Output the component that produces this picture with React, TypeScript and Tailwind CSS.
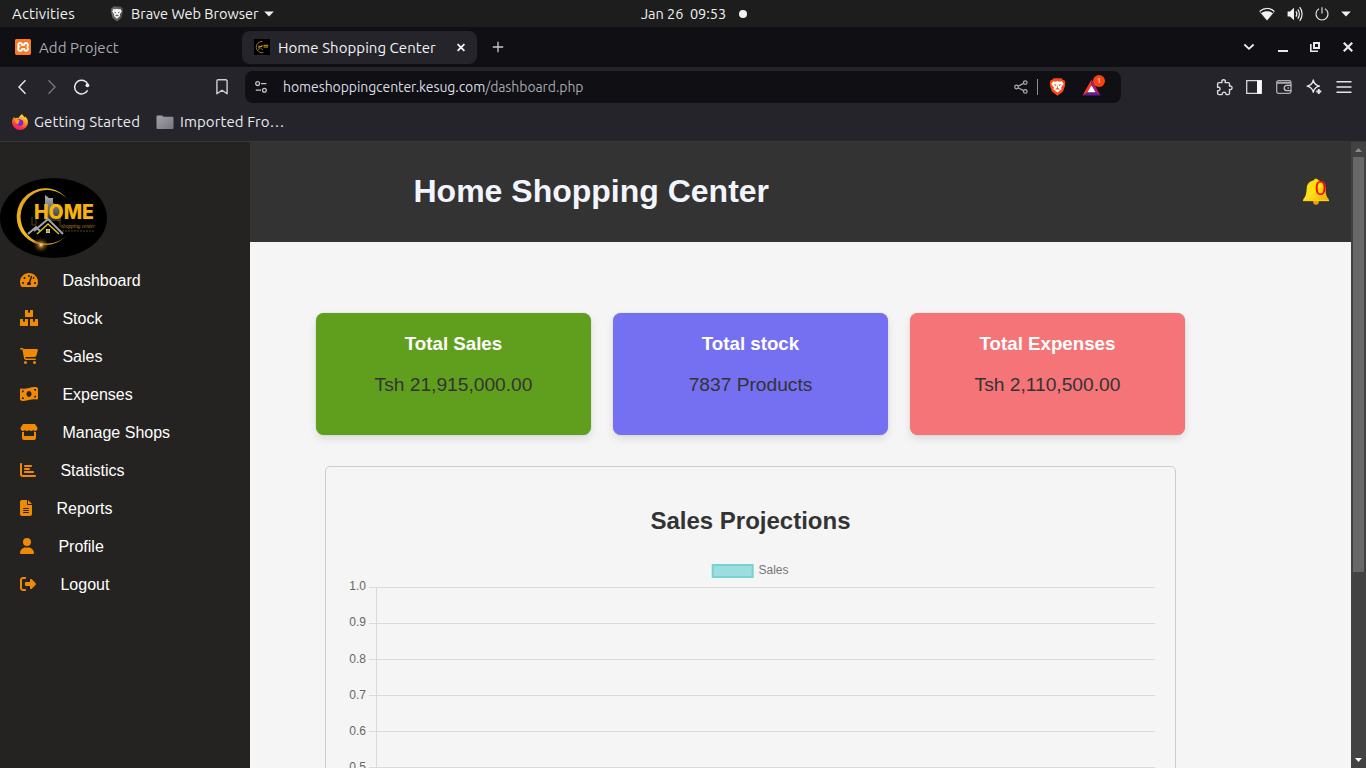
import React from "react";
import {
  FaCartShopping,
  FaMoneyBillWave,
  FaStore,
  FaChartBar,
  FaFileLines,
  FaUser,
  FaRightFromBracket,
} from "react-icons/fa6";
import { FaBoxes, FaTachometerAlt } from "react-icons/fa";
import { SiXampp } from "react-icons/si";

const ui = "font-['Ubuntu','Noto_Sans',sans-serif]";
const arial = "font-['Liberation_Sans',Arial,sans-serif]";

function Wifi() {
  return (
    <svg width="16" height="14" viewBox="0 0 16 14" fill="#f2f2f2">
      <path d="M8 13.2 0.6 4.4C4.6 .3 11.4 .3 15.4 4.4Z" fill="none" stroke="#9b9b9b" strokeWidth=".9" />
      <path d="M8 13.2 2.2 6.2C5.600 3.600 10.400 3.600 13.800 6.200Z" />
      <path d="M.8 4.4C4.8 .5 11.2 .5 15.2 4.4" fill="none" stroke="#f2f2f2" strokeWidth="1.2" />
    </svg>
  );
}

function Volume() {
  return (
    <svg width="16" height="16" viewBox="0 0 16 16" fill="none" stroke="#f2f2f2">
      <path d="M.6 5.5H3L7 1.8v12.4L3 10.5H.6Z" fill="#f2f2f2" stroke="none" />
      <path d="M9 5.4c1 1.5 1 3.7 0 5.2M10.8 3.4c2.1 2.6 2.1 6.6 0 9.2M12.7 1.2c3.2 3.8 3.2 9.8 0 13.6" strokeWidth="1.2" />
    </svg>
  );
}

function Power() {
  return (
    <svg width="14" height="14" viewBox="0 0 14 14" fill="none" stroke="#e8e8e8" strokeWidth="1.1">
      <path d="M7 .3v6.2M4 1.8a6 6 0 1 0 6 0" />
    </svg>
  );
}

function Caret() {
  return (
    <svg width="10" height="6" viewBox="0 0 10 6" fill="#f2f2f2">
      <path d="M.2.5h9.600L5 5.5Z" />
    </svg>
  );
}

function SystemBar() {
  return (
    <div className="flex h-[27px] items-center bg-[#1d1d1d] text-[14.5px] leading-[27px] text-[#f2f2f2]">
      <span className="ml-[12px] w-[97px] text-[15px] tracking-[0.14px]">Activities</span>
      <span className="flex h-4 w-4 items-center justify-center">
        <svg width="14" height="16" viewBox="0 0 14 16">
          <linearGradient id="shield" x1="0" x2="1">
            <stop offset="0" stopColor="#707070" />
            <stop offset="1" stopColor="#4c4c4c" />
          </linearGradient>
          <path d="M3.6.5h6.8l1.3 1.3 1.3 1-.4 2 .4 1-1.7 6.2L7 15.6l-4.3-3.6L1 5.8l.4-1-.4-2 1.3-1Z" fill="url(#shield)" />
          <path d="m3.5 3 2 .2L7 2.8l1.5.4 2-.2 1.3 2.5-2 2.8.2 1.8L7 12.8l-3-2.7.2-1.8-2-2.8Z" fill="#f7f7f7" />
          <path d="m3.8 5.5 2.4.7-.5 1.2ZM10.2 5.5l-2.4.7.5 1.2ZM5 9.4l2-1 2 1-2 1Z" fill="#666" />
        </svg>
      </span>
      <span className="ml-[6px] w-[129px] whitespace-nowrap tracking-[-0.02px]">Brave Web Browser</span>
      <span className="ml-[4px] flex">
        <Caret />
      </span>
      <span className="ml-[367px] w-[86px] whitespace-pre tracking-[-0.03px]">Jan 26  09:53</span>
      <span className="ml-[12px] h-2 w-2 rounded-full bg-[#f2f2f2]" />
      <span className="ml-auto flex items-center pr-[15px]">
        <Wifi />
        <span className="ml-[12px] flex">
          <Volume />
        </span>
        <span className="ml-[12px] flex">
          <Power />
        </span>
        <span className="ml-[12px] flex">
          <Caret />
        </span>
      </span>
    </div>
  );
}

function MiniLogo() {
  return (
    <svg width="16" height="16" viewBox="0 0 16 16" className="shrink-0">
      <rect width="16" height="16" fill="#000" />
      <path d="M8.5 2.5A5.6 5.6 0 1 0 9.5 13.4" fill="none" stroke="#8e7420" strokeWidth="1" />
      <path d="M5 6.5v3M5 7.6h3V6M9.5 6.3h4.8M9.5 8h4.6" stroke="#d3a514" strokeWidth="1" fill="none" />
      <path d="m4 11 2.5-2L9 11" stroke="#8a8560" strokeWidth=".8" fill="none" />
    </svg>
  );
}

function TabStrip() {
  return (
    <div className="flex h-[40px] items-center bg-[#0f0f14]">
      <div className="flex w-[242px] items-center pl-[15px]">
        <span className="flex h-4 w-4 items-center justify-center rounded-[3px] bg-[#fb7a24]">
          <span className="flex h-3 w-3 items-center justify-center bg-white text-[16px] text-[#fb7a24]">
            <SiXampp className="shrink-0" />
          </span>
        </span>
        <span className="ml-[8px] pt-px text-[15px] leading-[20px] tracking-[0.07px] text-[#a9a9ad]">Add Project</span>
      </div>
      <div className="flex h-[33px] w-[235px] items-center rounded-[8px] bg-[#24242a] pl-[12px]">
        <MiniLogo />
        <span className="ml-[8px] w-[175px] whitespace-nowrap pt-px text-[15px] leading-[20px] tracking-[0.05px] text-[#f3f3f5]">Home Shopping Center</span>
        <svg width="16" height="16" viewBox="0 0 16 16" stroke="#f3f3f5" strokeWidth="1.8">
          <path d="m4.6 5.100 6.8 6.8M11.4 5.100l-6.8 6.8" />
        </svg>
      </div>
      <svg width="12" height="12" viewBox="0 0 12 12" stroke="#c9c9cc" strokeWidth="1.3" className="ml-[15px]">
        <path d="M6 .8v10.4M.8 6h10.4" />
      </svg>
      <div className="ml-auto flex items-center pr-[12px]">
        <svg width="12" height="8" viewBox="0 0 12 8" fill="none" stroke="#f2f2f4" strokeWidth="1.8">
          <path d="m1.4 1.5 4.6 4.3 4.6-4.3" />
        </svg>
        <svg width="10" height="10" viewBox="0 0 10 10" fill="#e8e8ee" className="ml-[23px]">
          <path d="M0 8h10v2H0z" />
        </svg>
        <svg width="10" height="10" viewBox="0 0 10 10" fill="none" stroke="#e8e8ee" className="ml-[22px]">
          <path d="M4 1h5v5H4z" strokeWidth="2" />
          <path d="M.8 2v7.2H8" strokeWidth="1.6" />
        </svg>
        <svg width="12" height="12" viewBox="0 0 12 12" stroke="#e8e8ee" strokeWidth="2.2" className="ml-[22px]">
          <path d="m1.8 1.8 8.4 8.4M10.2 1.8l-8.4 8.4" />
        </svg>
      </div>
    </div>
  );
}

function AddressRow() {
  return (
    <div className="flex h-[40px] items-center">
      <svg width="92" height="16" viewBox="0 0 92 16" fill="none" strokeWidth="1.4">
        <path d="M25.5 1.3 19 8l6.5 6.7" stroke="#ececf0" />
        <path d="m48.5 1.3 6.5 6.7-6.5 6.7" stroke="#76767c" />
        <path d="M88 5.6A6.9 6.9 0 1 0 87.6 11.4" stroke="#ececf0" strokeWidth="1.5" />
        <circle cx="87.4" cy="6.3" r="1.9" fill="#ececf0" />
      </svg>
      <svg width="12" height="16" viewBox="0 0 12 16" fill="none" stroke="#ceced3" strokeWidth="1.4" className="ml-[124px]">
        <path d="M.9 14.8V2A1.2 1.2 0 0 1 2.1.8h7.8A1.2 1.2 0 0 1 11.1 2v12.8L6 11.2Z" strokeLinejoin="round" />
      </svg>
      <div className="ml-[17px] flex h-[32px] w-[876px] items-center rounded-[8px] bg-[#0f0f14] pl-[10px]">
        <svg width="12" height="12" viewBox="0 0 12 12" fill="none" stroke="#c3c3c8" strokeWidth="1.3">
          <circle cx="2.6" cy="2.6" r="1.9" />
          <circle cx="9.4" cy="9.2" r="1.9" />
          <path d="M6 2.6h5.4M.7 9.2H6" />
        </svg>
        <span className="ml-[16px] w-[731px] whitespace-nowrap text-[14px] tracking-[-0.08px] text-[#a7a7ac]">
          <span className="text-[#dcdce4]">homeshoppingcenter.kesug.com</span>/dashboard.php
        </span>
        <svg width="14" height="14" viewBox="0 0 14 14" fill="none" stroke="#adadb2" strokeWidth="1.2">
          <circle cx="2.5" cy="7" r="1.8" />
          <circle cx="11.3" cy="2.6" r="1.8" />
          <circle cx="11.3" cy="11.4" r="1.8" />
          <path d="m4.1 6.2 5.5-2.8M4.1 7.8l5.5 2.8" />
        </svg>
        <span className="ml-[9px] h-4 w-px bg-[#8e8e93]" />
        <svg width="17" height="18" viewBox="0 0 17 18" className="ml-[11px]">
          <path d="M4.6.3h7.8l1.6 1.6 1.4.4 1 2.4-.5 1.3.3 1.2L14 13.6l-5.5 4.2L3 13.6.8 7.2l.3-1.2L.6 4.7l1-2.4L3 1.9Z" fill="#fb4a14" />
          <path d="m4.3 3.3 2.2.4 2-.6 2 .6 2.2-.4 2 2.6-2.5 3.3.3 2.1-4 3.3-4-3.3.3-2.1L2.3 5.9Z" fill="#fff" />
          <path d="m4.4 6 3 .8-.6 1.5ZM12.6 6l-3 .8.6 1.5ZM8.5 6.8l.5 3-.5.7-.5-.7ZM5.8 11.2l2.7-1.4 2.7 1.4-2.7.2Z" fill="#fb4a14" />
        </svg>
        <span className="relative ml-[16px] h-[17px] w-[20px]">
          <svg width="20" height="17" viewBox="0 0 20 17">
            <path d="M9.5.5.5 16.5 9.5 12Z" fill="#fc3a1c" />
            <path d="m9.5.5 9 16L9.5 12Z" fill="#b01e78" />
            <path d="m.5 16.5 9-6 9 6Z" fill="#631d8f" />
            <path d="m9.5 6.5 4 6.8h-8Z" fill="#fff" />
          </svg>
          <span className="absolute -top-[4px] left-[11px] h-3 w-3 rounded-full bg-[#fb4112] text-center text-[8px] leading-[12px] text-white">1</span>
        </span>
      </div>
      <div className="ml-auto flex items-center pr-[14px]">
        <svg width="17" height="17" viewBox="0 0 17 17" fill="none" stroke="#dadade" strokeWidth="1.4" strokeLinejoin="round">
          <path d="M3 3.6h3.1c-.8-1.5 0-2.9 1.5-2.9s2.3 1.4 1.500 2.900h3.100a1.300 1.300 0 0 1 1.300 1.300v2.300c1.300-.6 2.600.2 2.600 1.600s-1.300 2.200-2.600 1.600v3.900a1.300 1.300 0 0 1-1.300 1.300h-2.100c.2-1.500-.8-2.300-2-2.300s-2.200.8-2 2.300H2.900a1.300 1.300 0 0 1-1.300-1.300v-2.700c1.600.3 2.400-.5 2.400-1.800S3.200 8 1.600 8.300V5A1.400 1.400 0 0 1 3 3.600Z" />
        </svg>
        <svg width="16" height="14" viewBox="0 0 16 14" className="ml-[13px]">
          <path d="M.7.7h14.600v12.600H.7Z" fill="none" stroke="#d8d8dc" strokeWidth="1.300" />
          <path d="M11 .5h4.500v13H11Z" fill="#fff" />
        </svg>
        <svg width="16" height="14" viewBox="0 0 16 14" fill="none" stroke="#a9a9ae" strokeWidth="1.300" className="ml-[14px]">
          <rect x=".7" y=".7" width="14.300" height="12.600" rx="1.800" />
          <path d="M.7 2.800H15" strokeWidth="2" />
          <path d="M15.300 5.400h-4.500a2.600 2.600 0 0 0 0 5.200h4.500" stroke="#c8c8cc" />
          <path d="M11.500 8h1.500" />
        </svg>
        <svg width="16" height="16" viewBox="0 0 16 16" fill="none" stroke="#e6e6ea" strokeWidth="1.300" strokeLinejoin="round" className="ml-[14px]">
          <path d="M7.300 1c.8 4 2.200 5.400 6.200 6.200-2 .4-3.300 1-4.200 2-1 .9-1.600 2.200-2 4.200C6.500 9.400 5.100 8 1.100 7.200 5.100 6.400 6.500 5 7.300 1Z" />
          <path d="M12.800 10v5M10.300 12.500h5" strokeWidth="1.900" />
        </svg>
        <svg width="16" height="12" viewBox="0 0 16 12" fill="#e6e6ea" className="ml-[14px]">
          <path d="M.5 0h15v1.400H.5zM.5 5.300h15v1.400H.5zM.5 10.600h15V12H.5z" />
        </svg>
      </div>
    </div>
  );
}

function Bookmarks() {
  return (
    <div className="flex h-[34px] items-center pb-[4px] pl-[12px] text-[15px] leading-[20px] text-[#ebebef]">
      <svg width="16" height="16" viewBox="0 0 16 16">
        <defs>
          <linearGradient id="fox" x1=".8" y1="0" x2=".3" y2="1">
            <stop offset="0" stopColor="#fff13f" />
            <stop offset=".4" stopColor="#ff9a22" />
            <stop offset=".75" stopColor="#ff3a3a" />
            <stop offset="1" stopColor="#e31587" />
          </linearGradient>
        </defs>
        <path d="M10 0c1 1.500 1.400 2.200 2.800 3.400l.2-1C15.200 4 16 6 16 8.300a8 7.700 0 0 1-16 0C0 5.600 1 4 2.300 2.700l.4 1.500C4 3.500 5.500 3.500 6.500 4 7.500 2 8.500 1.600 10 0Z" fill="url(#fox)" />
        <path d="M4.500 6.300c2-.8 3.500-1.600 5.500-.3 2 1.400 1.800 4.400-.2 5.500-2.200 1.200-5 0-5-2.200 1.200.3 2.300-.3 2.600-1.200-1 0-2-.7-2.900-1.800Z" fill="#7a24d8" />
        <path d="M3 5.500c1.200-.5 2.400-.3 3.400.6l1.600.6c-.4 1-1.700 1-2 1.800-.3.700.3 1.400 1.300 1.500-2 .6-4.500-.8-4.300-4.500Z" fill="#ffa11c" />
      </svg>
      <span className="ml-[6px] w-[106px] whitespace-nowrap tracking-[0.12px]">Getting Started</span>
      <svg width="18" height="15" viewBox="0 0 18 15" className="ml-[16px]">
        <defs>
          <linearGradient id="folder" x1="0" y1="0" x2="1" y2="1">
            <stop offset="0" stopColor="#a3a2aa" />
            <stop offset="1" stopColor="#77767e" />
          </linearGradient>
        </defs>
        <path d="M.5 1.500a1 1 0 0 1 1-1h4.700l1.300 1.300h9a1 1 0 0 1 1 1v10.300a1 1 0 0 1-1 1h-15a1 1 0 0 1-1-1Z" fill="url(#folder)" />
      </svg>
      <span className="ml-[6px] tracking-[0.09px]">Imported Fro…</span>
    </div>
  );
}

function BrandLogo() {
  return (
    <svg width="107" height="80" viewBox="0 0 107 80" className="block">
      <defs>
        <linearGradient id="ring" x1="0" y1="0" x2="1" y2="1">
          <stop offset="0" stopColor="#d99a12" />
          <stop offset=".45" stopColor="#f2bd20" />
          <stop offset="1" stopColor="#c58b10" />
        </linearGradient>
        <linearGradient id="tower" x1="0" y1="0" x2="0" y2="1">
          <stop offset="0" stopColor="#b5b5b5" />
          <stop offset="1" stopColor="#2b2b2b" />
        </linearGradient>
        <radialGradient id="glow">
          <stop offset="0" stopColor="#fff0b0" />
          <stop offset=".3" stopColor="#b17b22" stopOpacity=".7" />
          <stop offset="1" stopColor="#000" stopOpacity="0" />
        </radialGradient>
      </defs>
      <ellipse cx="53.500" cy="40" rx="53.500" ry="40" fill="#000" />
      <path d="M69 23A28.500 28.500 0 1 0 67 57 26.800 26.800 0 1 1 69 23Z" fill="url(#ring)" />
      <circle cx="41" cy="67" r="9" fill="url(#glow)" />
      <path d="M45 36V17l4 3h4v5l8 4v14H45Z" fill="url(#tower)" />
      <path d="M32 39v8h4v-6M58 44v-2h2v7" stroke="#59420b" fill="none" />
      <text x="34" y="41" textLength="60" lengthAdjust="spacingAndGlyphs" fontFamily="Inter, sans-serif" fontWeight="800" fontSize="19.500" fill="#f5b30c">
        HOME
      </text>
      <path d="m28 56 8-7 4 4M34 53l14-12 15 15" fill="none" stroke="#a4a4aa" strokeWidth="2" />
      <path d="m37 56 11-10 11 10" fill="none" stroke="#d8bd2c" strokeWidth="1.500" />
      <path d="M46 51h4v4h-4z" fill="#f7e58a" />
      <path d="M48 51v4M46 53h4" stroke="#40370c" strokeWidth=".5" />
      <text x="61" y="49.500" textLength="34" lengthAdjust="spacingAndGlyphs" fontFamily="Liberation Serif, serif" fontStyle="italic" fontSize="5.800" fill="#a98218">
        shopping center
      </text>
      <path d="M62 53h33" stroke="#2b2108" strokeWidth="2" strokeDasharray="2 1" />
    </svg>
  );
}

const menu = [
  { label: "Dashboard", Icon: FaTachometerAlt, width: "w-[18px]" },
  { label: "Stock", Icon: FaBoxes, width: "w-[18px]" },
  { label: "Sales", Icon: FaCartShopping, width: "w-[18px]" },
  { label: "Expenses", Icon: FaMoneyBillWave, width: "w-[18px]" },
  { label: "Manage Shops", Icon: FaStore, width: "w-[18px]" },
  { label: "Statistics", Icon: FaChartBar, width: "w-[16px]" },
  { label: "Reports", Icon: FaFileLines, width: "w-[12px]" },
  { label: "Profile", Icon: FaUser, width: "w-[14px]" },
  { label: "Logout", Icon: FaRightFromBracket, width: "w-[16px]" },
];

function Sidebar() {
  return (
    <aside className={`w-[250px] shrink-0 bg-[#242321] pt-[36px] ${arial}`}>
      <BrandLogo />
      <nav className="mt-[4px]">
        {menu.map(({ label, Icon, width }) => (
          <a key={label} className="flex h-[38px] items-center pl-[20px] text-[16px] text-white">
            <Icon className={`mb-[2px] h-4 shrink-0 text-[#f08a04] ${width}`} />
            <span className="ml-[24.450px]">{label}</span>
          </a>
        ))}
      </nav>
    </aside>
  );
}

function Bell() {
  return (
    <svg width="28" height="28" viewBox="0 0 28 28">
      <defs>
        <linearGradient id="bell" x1="0" y1="0" x2="1" y2="1">
          <stop offset="0" stopColor="#ffd500" />
          <stop offset=".5" stopColor="#ffe21a" />
          <stop offset="1" stopColor="#f5a800" />
        </linearGradient>
      </defs>
      <circle cx="14" cy="24" r="2.800" fill="#f59a0c" />
      <path d="M14 .8c1.300 0 2 .6 2.200 1.500 4 .8 6.800 3.500 7.100 7.700.3 4.500.6 7.500 2.300 9.800.9 1 1.700 2.700.9 2.700H1.500c-.8 0 0-1.700.9-2.700C4.100 17.500 4.400 14.500 4.700 10c.3-4.200 3.100-6.900 7.100-7.700C12 1.400 12.700.8 14 .8Z" fill="url(#bell)" />
      <path d="M1 22.500h26" stroke="#ffd21a" strokeWidth="1.300" />
    </svg>
  );
}

const cards = [
  { title: "Total Sales", value: "Tsh 21,915,000.00", color: "bg-[#609f1e]" },
  { title: "Total stock", value: "7837 Products", color: "bg-[#7570f2]" },
  { title: "Total Expenses", value: "Tsh 2,110,500.00", color: "bg-[#f47477]" },
];

const ticks = [
  { label: "1.0", y: 35 },
  { label: "0.9", y: 71 },
  { label: "0.8", y: 108 },
  { label: "0.7", y: 144 },
  { label: "0.6", y: 180 },
  { label: "0.5", y: 216 },
];

function Chart() {
  return (
    <section className="ml-[75px] mt-[31px] h-[400px] w-[851px] rounded-[5px] border border-[#cccccc]">
      <h2 className="mt-[40px] text-center text-[24px] leading-[28px] font-bold text-[#333]">Sales Projections</h2>
      <svg width="849" height="300" viewBox="0 0 849 300" className="mt-[20px] block">
        <rect x="386.700" y="10" width="40" height="12" fill="#9bdedd" stroke="#78d2d1" strokeWidth="2" />
        <g fontFamily="Liberation Sans, Arial, sans-serif" fontSize="12" fill="#666">
          <text x="432.500" y="19" fill="#777">
            Sales
          </text>
          {ticks.map((t) => (
            <text key={t.label} x="40" y={t.y} textAnchor="end">
              {t.label}
            </text>
          ))}
        </g>
        <g stroke="#dadada">
          {ticks.map((t, i) => (
            <path key={t.label} d={`M43 ${32.500 + i * 36}H829`} />
          ))}
          <path d="M50.500 32v260" />
        </g>
      </svg>
    </section>
  );
}

function Scrollbar() {
  return (
    <div className="flex w-[15px] shrink-0 flex-col items-center bg-[#424242]">
      <svg width="15" height="15" viewBox="0 0 15 15" fill="#8c8c8c">
        <path d="M4 10h7L7.500 6Z" />
      </svg>
      <div className="h-[415px] w-[11px] bg-[#686868]" />
      <svg width="15" height="15" viewBox="0 0 15 15" fill="#fff" className="mt-auto">
        <path d="M4 5h7L7.500 9Z" />
      </svg>
    </div>
  );
}

export default function App() {
  return (
    <div className={`flex h-[768px] w-[1366px] flex-col overflow-hidden ${ui}`}>
      <SystemBar />
      <TabStrip />
      <div className="border-b border-[#37353a] bg-[#24242a]">
        <AddressRow />
        <Bookmarks />
      </div>
      <div className="flex min-h-0 flex-1">
        <Sidebar />
        <main className={`min-w-0 flex-1 overflow-hidden bg-[#f5f5f5] ${arial}`}>
          <header className="flex h-[100px] items-center bg-[#333] pl-[163.500px]">
            <h1 className="pb-[2px] text-[32px] leading-[37px] font-bold text-[#f3f5fc]">Home Shopping Center</h1>
            <div className="relative ml-auto mr-[21px]">
              <Bell />
              <span className="absolute left-[13px] top-[-1px] text-[20px] leading-[22px] text-[#ff0000]">0</span>
            </div>
          </header>
          <div className="flex gap-[22px] pl-[66px] pt-[71px]">
            {cards.map((c) => (
              <div key={c.title} className={`h-[122px] w-[275px] rounded-[8px] pt-[20px] text-center shadow-[0_4px_8px_rgba(0,0,0,0.1),0_0_1px_rgba(0,0,0,0.35)] ${c.color}`}>
                <h3 className="text-[18.720px] leading-[22px] font-bold text-white">{c.title}</h3>
                <p className="mt-[19px] text-[19.200px] leading-[22px] text-[#333]">{c.value}</p>
              </div>
            ))}
          </div>
          <Chart />
        </main>
        <Scrollbar />
      </div>
    </div>
  );
}
